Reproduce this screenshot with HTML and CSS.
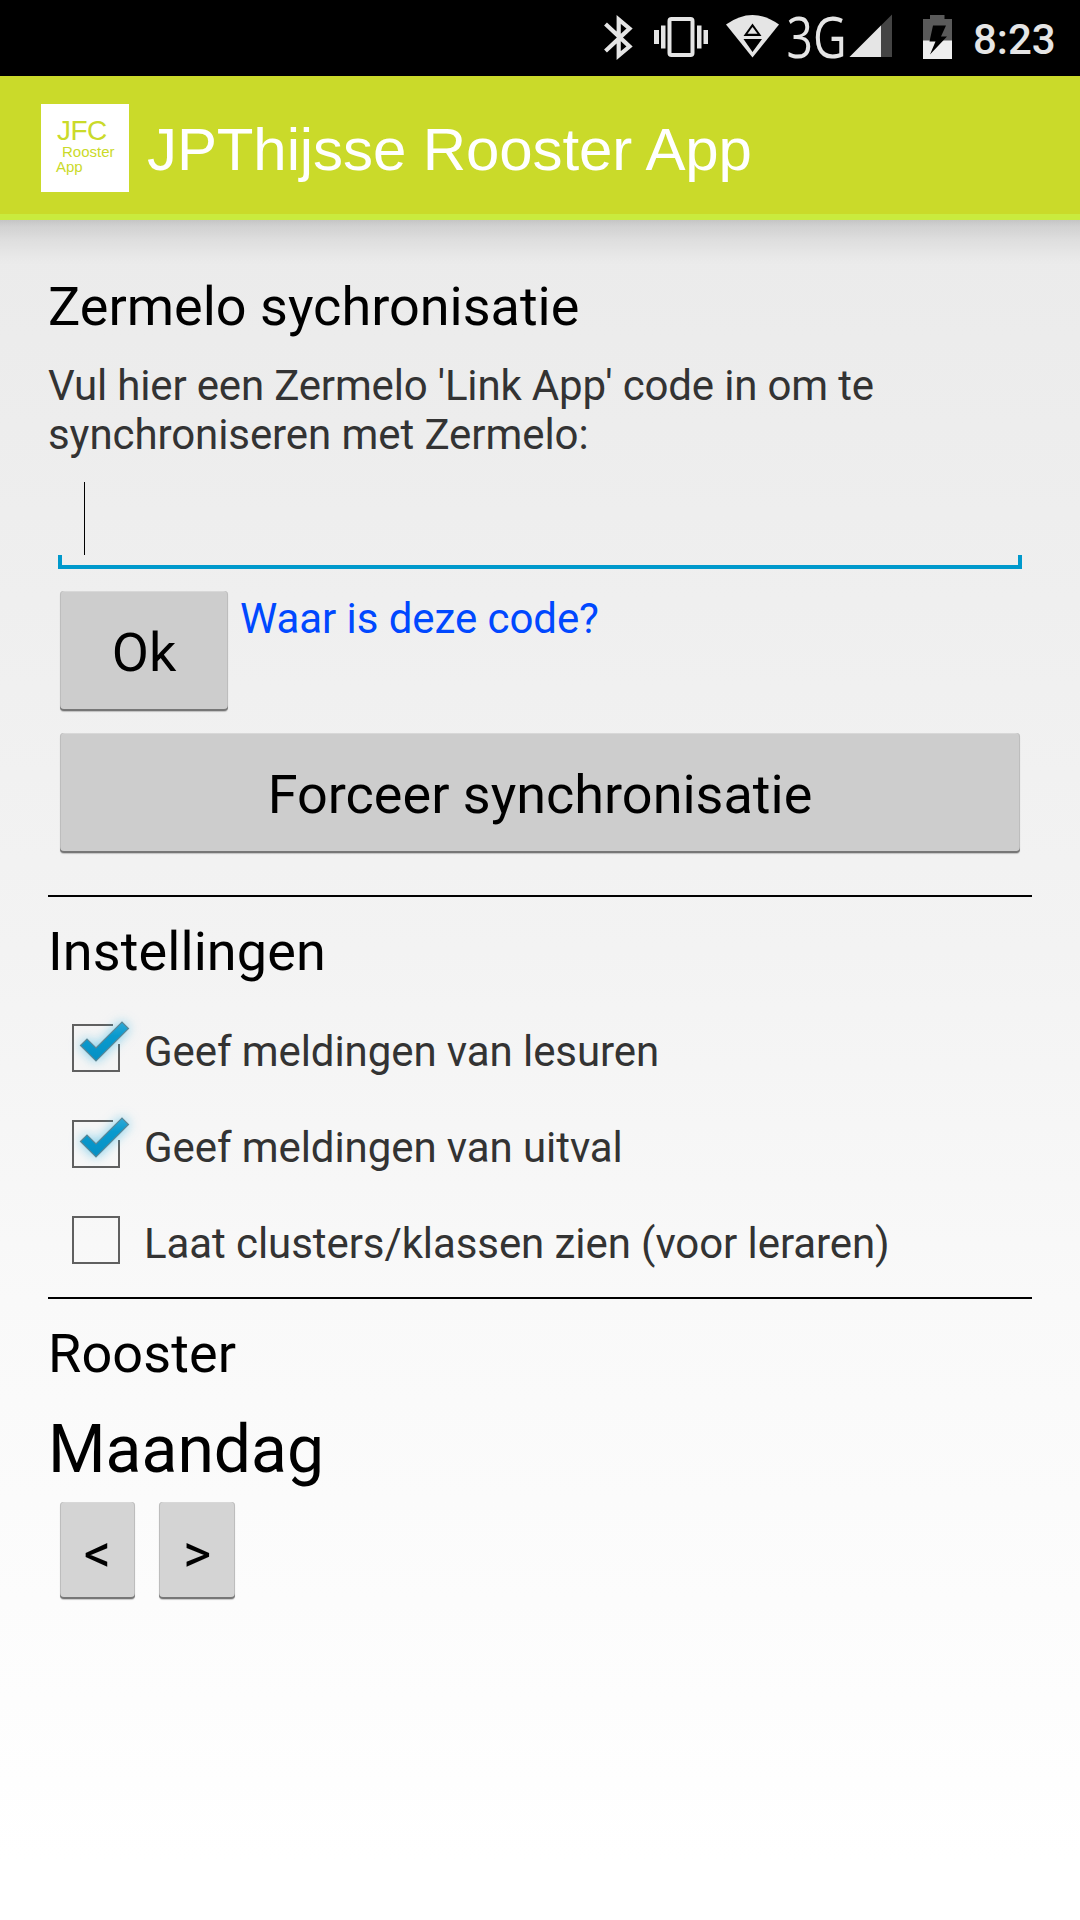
FILE: index.html
```html
<!DOCTYPE html>
<html lang="nl">
<head>
<meta charset="utf-8">
<title>JPThijsse Rooster App</title>
<link rel="stylesheet" href="styles.css">
</head>
<body>
<header class="status-bar">
  <svg class="status-icon" width="30" height="76" viewBox="603 0 30 76">
    <path d="M605.5 24L629.5 46.5L618.7 55.5V19.500L629.500 28.500L605.500 51" fill="none" stroke="#e5e5e5" stroke-width="4.200"/>
  </svg>
  <svg class="status-icon vibrate" width="56" height="76" viewBox="653 0 56 76" fill="#e5e5e5">
    <rect x="654" y="30" width="5" height="14"/><rect x="661" y="25.500" width="4.500" height="23"/>
    <rect x="669.500" y="19" width="23" height="36" rx="2" fill="none" stroke="#e5e5e5" stroke-width="4"/>
    <rect x="697" y="25.500" width="4.500" height="23"/><rect x="703.500" y="30" width="4.500" height="14"/>
  </svg>
  <svg class="status-icon wifi" width="56" height="76" viewBox="725 0 56 76">
    <path d="M726 24.500Q752.500 5.500 779 24.500L752.500 57.500Z" fill="#e5e5e5"/>
    <path d="M752.500 23.500L761.500 36H743.500ZM743.500 39H762L752.500 52Z" fill="#000"/>
    <path d="M752.500 27L757.500 33.800H747.500Z" fill="#e5e5e5"/>
    <path d="M746.500 40.500H758.500L752.500 49.500Z" fill="#000"/>
  </svg>
  <svg class="status-icon network" width="62" height="76" viewBox="787 0 62 76">
    <text class="network-label" x="786.500" y="58" textLength="60" lengthAdjust="spacingAndGlyphs">3G</text>
  </svg>
  <svg class="status-icon signal" width="43" height="76" viewBox="849 0 43 76">
    <path d="M849.500 57L892 14.500V57Z" fill="#444"/><path d="M849.500 57L881 25.500V57Z" fill="#e5e5e5"/>
  </svg>
  <svg class="status-icon battery" width="30" height="76" viewBox="922 0 30 76">
    <path d="M923 19H930V15H944.500V19H952V41H923Z" fill="#5a5a5a"/>
    <path d="M923 40.500H952V59H923Z" fill="#eee"/>
    <path d="M933 25.500H946L941 36.500H947L930 54.500L935.500 41.500H929.500Z" fill="#000"/>
  </svg>
  <time class="clock">8:23</time>
</header>
<div class="action-bar">
  <div class="app-icon">
    <span class="icon-name">JFC</span>
    <span class="icon-word">Rooster</span>
    <span class="icon-word icon-last">App</span>
  </div>
  <h1 class="app-title">JPThijsse Rooster App</h1>
</div>
<main class="content">
  <section>
    <h2 class="heading">Zermelo sychronisatie</h2>
    <p class="body-text intro">Vul hier een Zermelo 'Link App' code in om te<br>synchroniseren met Zermelo:</p>
    <div class="code-input"><span class="caret"></span><span class="underline"></span></div>
    <div class="code-actions">
      <button class="button ok">Ok</button>
      <a class="help-link">Waar is deze code?</a>
    </div>
    <button class="button force">Forceer synchronisatie</button>
  </section>
  <section class="settings">
    <h2 class="heading wide">Instellingen</h2>
    <div class="options">
      <label class="option">
        <svg class="check" width="72" height="96" viewBox="0 0 72 96">
          <defs>
            <linearGradient id="tick-fill" x1="0" y1="0" x2="0" y2="1">
              <stop offset="0" stop-color="#2fa9d6"/><stop offset=".35" stop-color="#0a9ace"/><stop offset="1" stop-color="#0590c4"/>
            </linearGradient>
          </defs>
          <path d="M41 25H1V71H47V44" fill="none" stroke="#606060" stroke-width="2"/>
          <path class="tick" d="M8.500 45.500L15 39L24 48L50 22L56.500 28.500L24 61Z"/>
        </svg>
        <span class="body-text">Geef meldingen van lesuren</span>
      </label>
      <label class="option">
        <svg class="check" width="72" height="96" viewBox="0 0 72 96">
          <path d="M41 25H1V71H47V44" fill="none" stroke="#606060" stroke-width="2"/>
          <path class="tick" d="M8.500 45.500L15 39L24 48L50 22L56.500 28.500L24 61Z"/>
        </svg>
        <span class="body-text">Geef meldingen van uitval</span>
      </label>
      <label class="option">
        <svg class="check" width="72" height="96" viewBox="0 0 72 96">
          <rect x="1" y="25" width="46" height="46" fill="none" stroke="#606060" stroke-width="2"/>
        </svg>
        <span class="body-text">Laat clusters/klassen zien (voor leraren)</span>
      </label>
    </div>
  </section>
  <section class="schedule">
    <h2 class="heading wide">Rooster</h2>
    <p class="day">Maandag</p>
    <div class="day-nav">
      <button class="button prev">&lt;</button>
      <button class="button next">&gt;</button>
    </div>
  </section>
</main>
</body>
</html>
```
FILE: styles.css
```css
* { box-sizing: border-box; }
body {
  margin: 0;
  width: 1080px;
  height: 1920px;
  overflow: hidden;
  display: flex;
  flex-direction: column;
  background: linear-gradient(#e9e9e9 76px, #f3f3f3 950px, #f9f9f9 1300px, #fdfdfd 1700px, #fff 1860px);
  color: #000;
  font-family: Roboto, sans-serif;
}
h1, h2, p { margin: 0; font-weight: 400; }

.status-bar {
  flex: none;
  height: 76px;
  padding-right: 24px;
  display: flex;
  justify-content: flex-end;
  background: #000;
}
.status-icon { flex: none; display: block; }
.vibrate { margin-left: 20px; }
.wifi { margin-left: 16px; }
.network { margin-left: 6px; }
.battery { margin-left: 30px; }
.network-label { font: 400 56px "Open Sans", sans-serif; fill: #e5e5e5; }
.clock {
  width: 83px;
  margin-left: 21px;
  padding-top: 15px;
  font-size: 42px;
  font-weight: 500;
  line-height: 49px;
  color: #e5e5e5;
  white-space: nowrap;
}

.action-bar {
  flex: none;
  height: 144px;
  padding: 28px 0 0 41px;
  display: flex;
  gap: 18px;
  background: #cada2a;
  border-bottom: 6px solid #c9eb3e;
  font-family: "Liberation Sans", Arial, sans-serif;
}
.app-icon {
  width: 88px;
  height: 88px;
  padding: 12px 0 0 15px;
  display: flex;
  flex-direction: column;
  background: #fff;
  color: #cada2a;
}
.icon-name { height: 28px; padding-left: 1px; font-size: 28px; line-height: 30px; letter-spacing: -0.6px; }
.icon-word { height: 15px; padding-left: 6px; font-size: 15px; line-height: 16px; }
.icon-last { padding-left: 0; }
.app-title { color: #fff; font-size: 60px; line-height: 69px; letter-spacing: -0.1px; padding-top: 11px; white-space: nowrap; }

.content {
  flex: 1;
  padding: 55px 48px 0;
  background: linear-gradient(rgba(0, 0, 0, .16), rgba(0, 0, 0, .11) 6px, rgba(0, 0, 0, .055) 20px, rgba(0, 0, 0, .015) 36px, transparent 45px);
}
.heading { font-size: 54px; line-height: 63px; }
.wide { letter-spacing: 0.1px; }
.body-text { font-size: 42px; line-height: 49px; letter-spacing: -0.08px; color: #333; white-space: nowrap; }
.intro { margin-top: 23px; }
.intro::first-line { letter-spacing: -0.17px; }
.code-input {
  height: 110px;
  padding: 23px 10px 0;
  display: flex;
  flex-direction: column;
}
.caret { width: 1px; height: 73px; margin-left: 26px; background: #000; }
.underline { height: 14px; border: 4px solid #0099cc; border-top: 0; }
.code-actions { display: flex; gap: 12px; margin: 22px 0 0 12px; }
.help-link { color: #0048ff; font-size: 42px; line-height: 49px; letter-spacing: -0.07px; padding-top: 3px; }
.button {
  display: block;
  padding: 3px 0 0;
  border: 0;
  border-radius: 4px;
  background: #cdcdcd;
  box-shadow: inset 0 -2px 0 #777, inset 1px 0 0 #bdbdbd, inset -1px 0 0 #bdbdbd, inset 0 1px 0 #d8d8d8, 0 1px 1px rgba(0, 0, 0, .2);
  color: #000;
  font: 400 54px/63px Roboto, sans-serif;
}
.ok { width: 168px; height: 120px; }
.force { width: 960px; height: 120px; margin: 22px 0 0 12px; }

.settings { margin-top: 42px; border-top: 2px solid #000; padding-top: 23px; }
.options { margin-top: 17px; padding-left: 24px; }
.option { height: 96px; display: flex; align-items: center; }
.option .body-text { padding-top: 6px; }
.check { flex: none; overflow: visible; }
.tick { fill: url(#tick-fill); stroke: #5d8796; stroke-width: 1.2; filter: drop-shadow(0 0 6px rgba(51, 181, 229, .65)); }

.schedule { margin-top: 9px; border-top: 2px solid #000; padding-top: 23px; }
.day { margin-top: 26px; font-size: 66px; line-height: 77px; }
.day-nav { display: flex; gap: 24px; margin: 14px 0 0 12px; }
.day-nav .button { height: 97px; padding-top: 6px; background: #d4d4d4; }
.prev { width: 75px; }
.next { width: 76px; }
```
